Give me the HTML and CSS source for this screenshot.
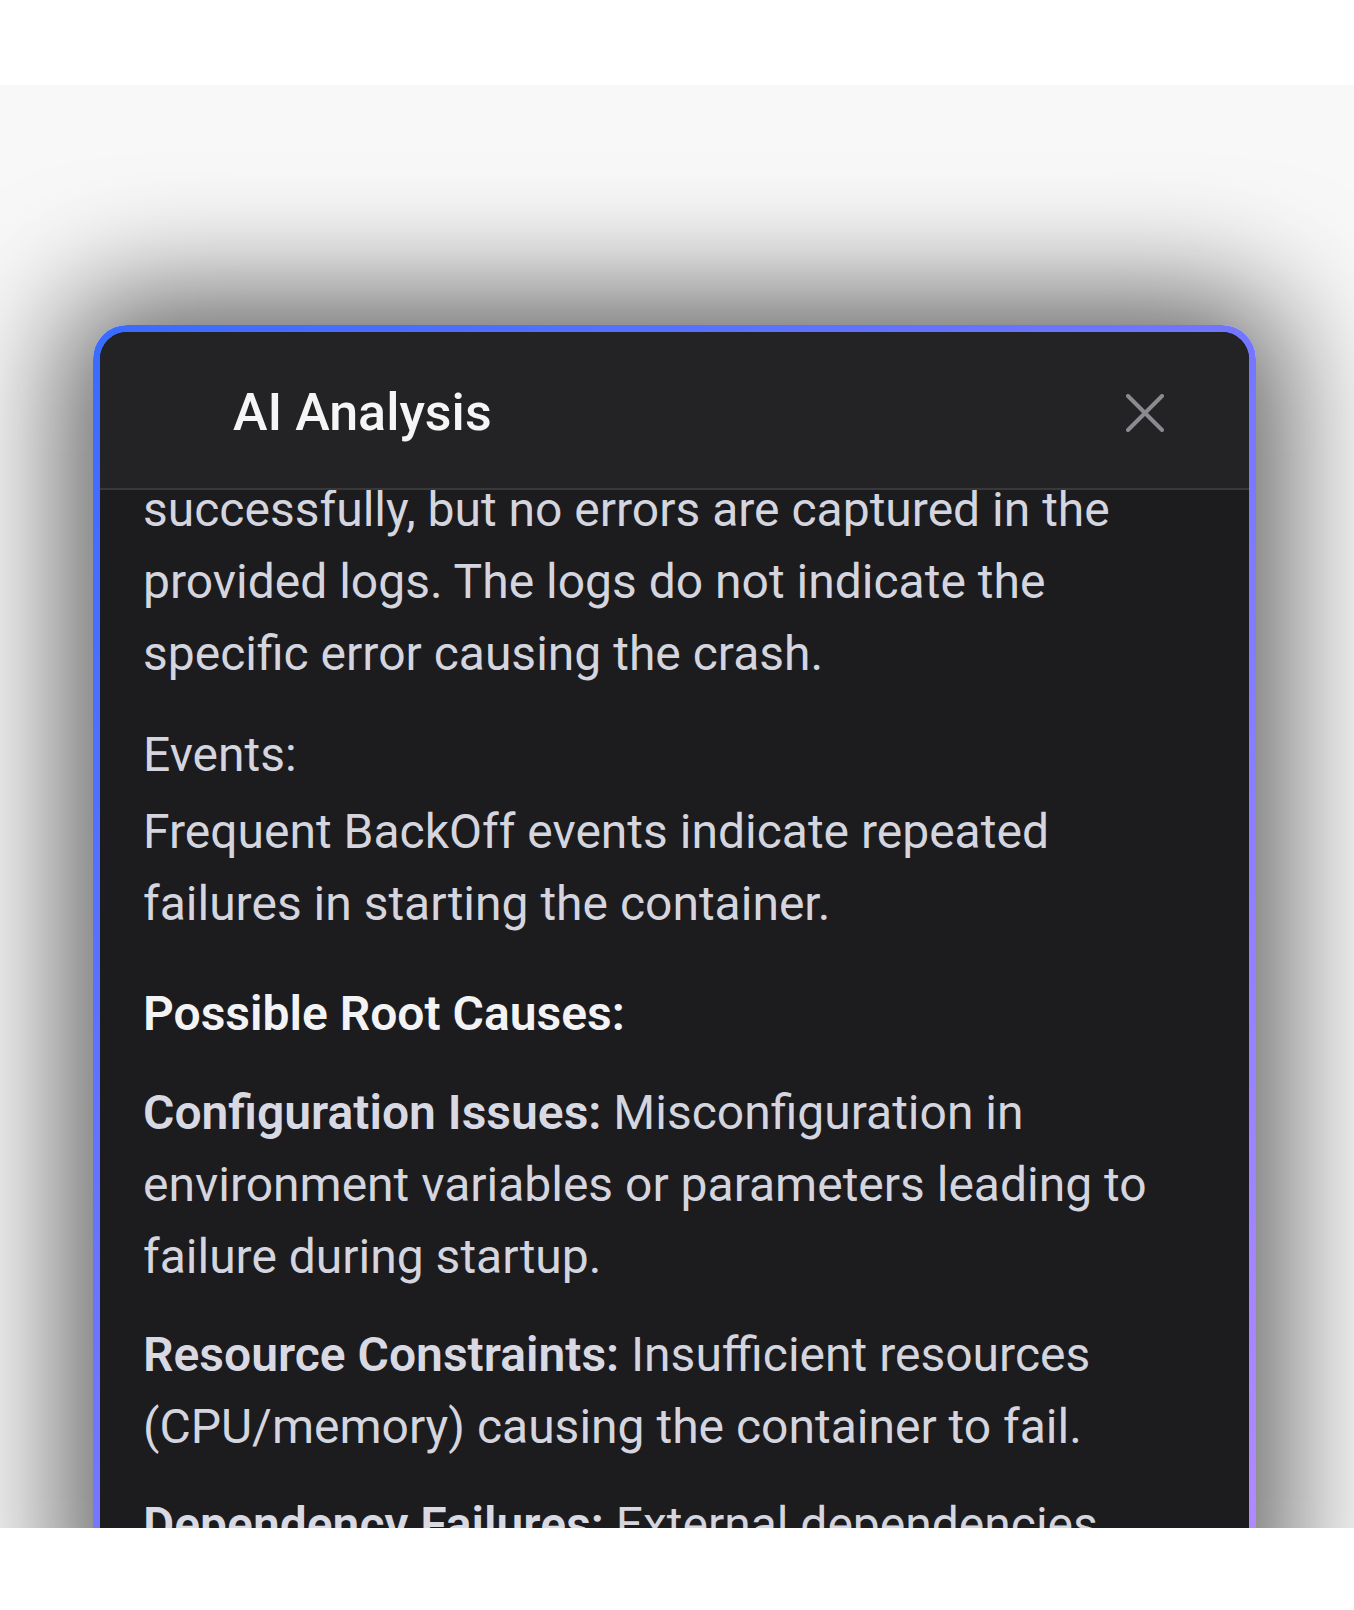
FILE: index.html
```html
<!DOCTYPE html>
<html lang="en">
<head>
<meta charset="utf-8">
<title>AI Analysis</title>
<link rel="stylesheet" href="styles.css">
</head>
<body>
<div class="top-band"></div>
<div class="stage">
  <div class="card">
    <div class="card-inner">
      <header class="header">
        <h2 class="title">AI Analysis</h2>
        <button class="close" aria-label="Close">
          <svg viewBox="0 0 38 38" width="38" height="38"><path d="M2 2 L36 36 M36 2 L2 36" fill="none" stroke="#8a8b90" stroke-width="4" stroke-linecap="round"/></svg>
        </button>
      </header>
      <div class="body">
        <div class="content">
          <p>successfully, but no errors are captured in the provided logs. The logs do not indicate the specific error causing the crash.</p>
          <p class="label">Events:</p>
          <p>Frequent BackOff events indicate repeated failures in starting the container.</p>
          <h3 class="heading">Possible Root Causes:</h3>
          <p class="cause"><strong>Configuration Issues:</strong> Misconfiguration in environment variables or parameters leading to failure during startup.</p>
          <p class="cause"><strong>Resource Constraints:</strong> Insufficient resources (CPU/memory) causing the container to fail.</p>
          <p class="cause"><strong>Dependency Failures:</strong> External dependencies (databases, APIs) not responding during startup.</p>
        </div>
      </div>
    </div>
  </div>
</div>
<div class="bottom-band"></div>
</body>
</html>
```
FILE: styles.css
```css
* { box-sizing: border-box; }
html, body { margin: 0; padding: 0; background: #ffffff; }
body { font-family: Roboto, "Liberation Sans", sans-serif; }

.top-band { height: 85px; background: #ffffff; }
.bottom-band { height: 82px; background: #ffffff; }

.stage {
  height: 1443px;
  background: #f8f8f8;
  overflow: hidden;
  padding-top: 240px;
  padding-left: 93px;
}

.card {
  width: 1163px;
  height: 1300px;
  padding: 7px;
  border-radius: 34px;
  background: linear-gradient(135deg, #3a6bff 0%, #7777ff 50%, #b58bff 100%);
  box-shadow: 0 0 120px 30px rgba(0, 0, 0, 0.6);
}

.card-inner {
  height: 100%;
  border-radius: 27px;
  background: #1c1c1e;
  overflow: hidden;
  display: flex;
  flex-direction: column;
}

.header {
  flex: 0 0 auto;
  height: 158px;
  background: #232325;
  border-bottom: 2px solid #39393c;
  display: flex;
  align-items: center;
  justify-content: space-between;
  padding: 6px 85px 0 133px;
}

.title {
  margin: 0;
  font-size: 52px;
  font-weight: 500;
  color: #f5f5f6;
  line-height: 1;
}

.close {
  background: none;
  border: 0;
  padding: 0;
  width: 38px;
  height: 38px;
  display: flex;
}

.body {
  flex: 1 1 auto;
  overflow: hidden;
  padding: 0 43px;
}

.content {
  margin-top: -16px;
  font-size: 48px;
  line-height: 72px;
  color: #d4d5df;
}

.content p { margin: 0 0 29px 0; }

.content p.label { margin-bottom: 5px; }

.content p.cause { margin-bottom: 26px; }

.content strong { font-weight: 600; color: #d8d9e2; }

.heading {
  margin: 38px 0 27px 0;
  font-size: 48px;
  line-height: 72px;
  font-weight: 600;
  color: #f3f3f5;
}
```
